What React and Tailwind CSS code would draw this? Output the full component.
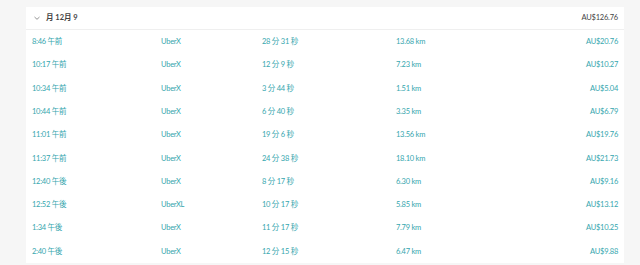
import React from "react";

const trips = [
  { time: "8:46 午前", type: "UberX", dur: "28 分 31 秒", dist: "13.68 km", fare: "AU$20.76" },
  { time: "10:17 午前", type: "UberX", dur: "12 分 9 秒", dist: "7.23 km", fare: "AU$10.27" },
  { time: "10:34 午前", type: "UberX", dur: "3 分 44 秒", dist: "1.51 km", fare: "AU$5.04" },
  { time: "10:44 午前", type: "UberX", dur: "6 分 40 秒", dist: "3.35 km", fare: "AU$6.79" },
  { time: "11:01 午前", type: "UberX", dur: "19 分 6 秒", dist: "13.56 km", fare: "AU$19.76" },
  { time: "11:37 午前", type: "UberX", dur: "24 分 38 秒", dist: "18.10 km", fare: "AU$21.73" },
  { time: "12:40 午後", type: "UberX", dur: "8 分 17 秒", dist: "6.30 km", fare: "AU$9.16" },
  { time: "12:52 午後", type: "UberXL", dur: "10 分 17 秒", dist: "5.85 km", fare: "AU$13.12" },
  { time: "1:34 午後", type: "UberX", dur: "11 分 17 秒", dist: "7.79 km", fare: "AU$10.25" },
  { time: "2:40 午後", type: "UberX", dur: "12 分 15 秒", dist: "6.47 km", fare: "AU$9.88" },
];

const App = () => {
  return (
    <div
      className="w-[640px] h-[265px] bg-[#f6f6f6] pt-[7px] pl-[26px]"
      style={{ fontFamily: "Lato, 'Noto Sans CJK JP', sans-serif" }}
    >
      <div className="w-[598px] bg-white">
        {/* Header */}
        <div className="h-[23px] flex items-center justify-between px-[6px] border-b border-[#efefef]">
          <div className="flex items-center gap-[5px]">
            <svg width="8" height="8" viewBox="0 0 8 8" className="ml-[1px]">
              <path d="M1.5 3 L4 5.3 L6.5 3" fill="none" stroke="#888" strokeWidth="0.9" />
            </svg>
            <span className="text-[7.5px] font-bold text-[#444]">月 12月 9</span>
          </div>
          <span className="text-[7.5px] text-[#444] tracking-[-0.2px]">AU$126.76</span>
        </div>

        {/* Trips */}
        {trips.map((t, i) => (
          <div
            key={i}
            className="h-[23.3px] grid grid-cols-[129px_101px_134px_1fr] items-center px-[6px] text-[7.5px] text-[#35a6ae] tracking-[-0.25px]"
          >
            <span>{t.time}</span>
            <span>{t.type}</span>
            <span>{t.dur}</span>
            <div className="flex justify-between">
              <span>{t.dist}</span>
              <span>{t.fare}</span>
            </div>
          </div>
        ))}
      </div>
    </div>
  );
};

export default App;
